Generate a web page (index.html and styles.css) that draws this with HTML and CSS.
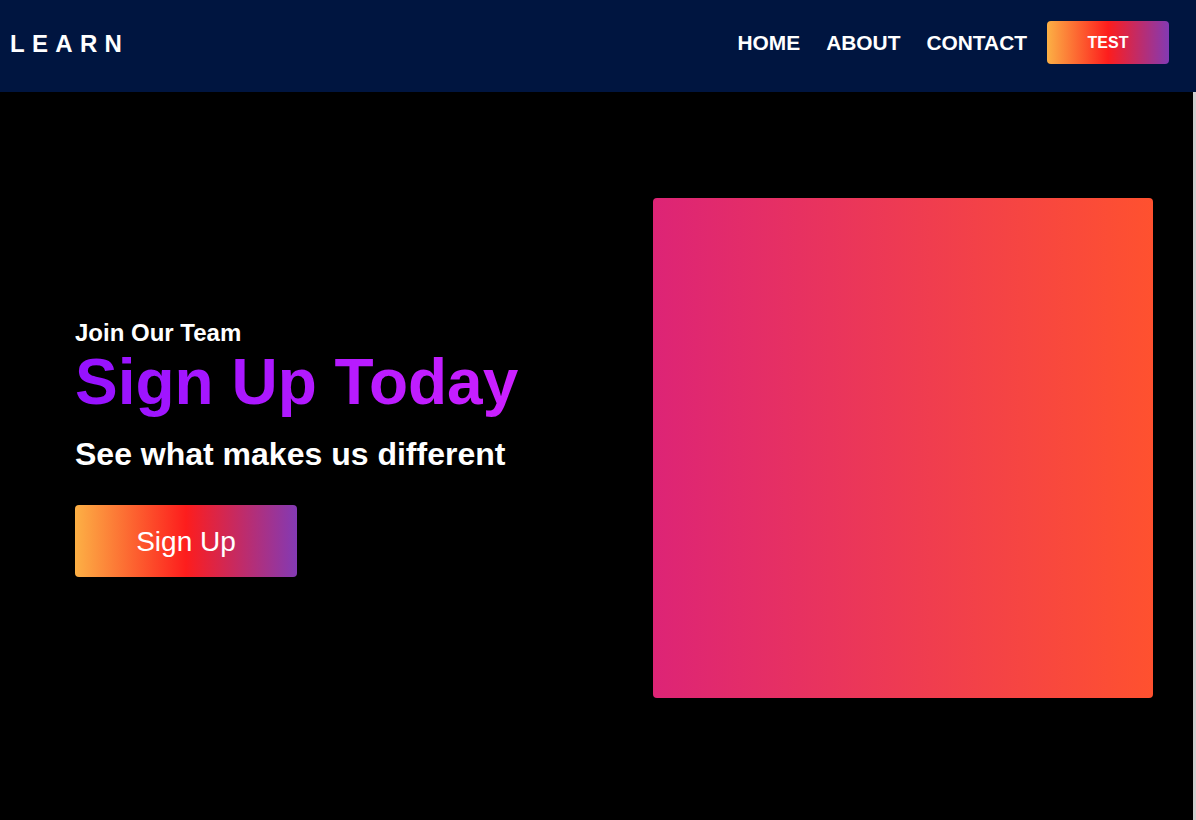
FILE: index.html
```html
<!DOCTYPE html>
<html lang="en">
<head>
<meta charset="utf-8">
<title>Learn</title>
<link rel="stylesheet" href="styles.css">
</head>
<body>
<header class="navbar">
  <div class="logo">LEARN</div>
  <nav class="nav">
    <a class="nav-link" href="#">HOME</a>
    <a class="nav-link" href="#">ABOUT</a>
    <a class="nav-link" href="#">CONTACT</a>
    <a class="nav-btn" href="#">TEST</a>
  </nav>
</header>
<main class="hero">
  <div class="hero-text">
    <p class="kicker">Join Our Team</p>
    <h1 class="title">Sign Up Today</h1>
    <h2 class="subtitle">See what makes us different</h2>
    <button class="signup-btn">Sign Up</button>
  </div>
  <div class="hero-img"></div>
</main>
</body>
</html>
```

FILE: styles.css
```css
* { box-sizing: border-box; }
html, body {
  margin: 0;
  padding: 0;
}
body {
  background: #cfcfcf;
  font-family: "Liberation Sans", Arial, sans-serif;
  color: #fff;
}
.navbar {
  height: 92px;
  background: #001540;
  display: flex;
  align-items: center;
  justify-content: space-between;
  padding: 0 27px 7px 10px;
}
.logo {
  font-size: 24px;
  font-weight: 700;
  letter-spacing: 7.3px;
  line-height: 1;
  padding-top: 2px;
}
.nav {
  display: flex;
  align-items: center;
  gap: 26px;
}
.nav-link {
  color: #fff;
  text-decoration: none;
  font-size: 20.9px;
  font-weight: 700;
  padding-top: 1px;
}
.nav-btn {
  width: 122px;
  height: 43px;
  display: flex;
  align-items: center;
  justify-content: center;
  margin-left: -6px;
  color: #fff;
  text-decoration: none;
  font-size: 16px;
  font-weight: 700;
  border-radius: 4px;
  background: linear-gradient(to right, #fcb045, #fd1d1d, #833ab4);
}
.hero {
  background: #000;
  margin-right: 3px;
  display: flex;
  align-items: center;
  justify-content: space-between;
  padding: 106px 40px 122px 75px;
}
.hero-text {
  display: flex;
  flex-direction: column;
  align-items: flex-start;
}
.kicker {
  margin: 0;
  font-size: 24px;
  font-weight: 700;
  line-height: 1.15;
}
.title {
  margin: 0;
  font-size: 64px;
  font-weight: 700;
  line-height: 1.15;
  background: linear-gradient(to right, #9512ff, #cc20ff);
  -webkit-background-clip: text;
  background-clip: text;
  color: transparent;
}
.subtitle {
  margin: 16px 0 0;
  font-size: 32px;
  font-weight: 700;
  line-height: 1.15;
}
.signup-btn {
  margin-top: 33px;
  width: 222px;
  height: 72px;
  border: none;
  border-radius: 4px;
  color: #fff;
  font-family: "Liberation Sans", Arial, sans-serif;
  font-size: 28px;
  padding-top: 2px;
  background: linear-gradient(to right, #fcb045, #fd1d1d, #833ab4);
}
.hero-img {
  width: 500px;
  height: 500px;
  flex-shrink: 0;
  border-radius: 4px;
  background: linear-gradient(to right, #dd2476, #ff512f);
}
```
